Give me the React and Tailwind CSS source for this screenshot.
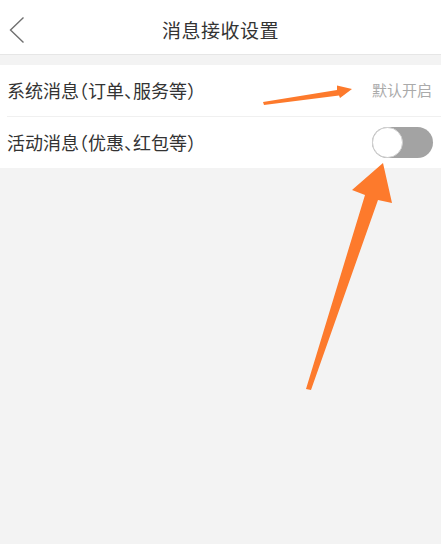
export default function App() {
  return (
    <div
      className="relative w-[441px] h-[544px] bg-[#f3f3f3] overflow-hidden"
      style={{ fontFamily: '"Noto Sans CJK SC", "Noto Sans", sans-serif' }}
    >
      <header className="relative flex items-center justify-center h-[55px] pt-[6px] bg-white border-b border-[#e6e6e6]">
        <svg className="absolute left-[8px] top-[15px]" width="18" height="30" viewBox="0 0 18 30">
          <path d="M15.5 2.5 L2.5 15 L15.5 27.5" fill="none" stroke="#707070" strokeWidth="1.4" />
        </svg>
        <h1 className="text-[19px] text-[#333] tracking-[0.5px]">消息接收设置</h1>
      </header>

      <div className="mt-[10px] bg-white pl-[7px] [font-feature-settings:'halt']">
        <div className="flex items-center justify-between h-[52px] pr-[9px] border-b border-[#f0f0f0]">
          <span className="text-[18px] text-[#333]">系统消息（订单、服务等）</span>
          <span className="text-[15px] text-[#aaa]">默认开启</span>
        </div>
        <div className="flex items-center justify-between h-[51px] pr-[8px]">
          <span className="text-[18px] text-[#333]">活动消息（优惠、红包等）</span>
          <div className="relative w-[61px] h-[31px] rounded-full bg-[#a3a3a3]">
            <div className="absolute left-0 top-0 w-[31px] h-[31px] rounded-full bg-white border border-[#d0d0d0]" />
          </div>
        </div>
      </div>

      <svg className="absolute left-0 top-0 pointer-events-none" width="441" height="544" viewBox="0 0 441 544">
        <polygon
          points="352,89 340,98 339,95.5 264,105 263,102 337,90 337,85.5"
          fill="#fd7a2c"
        />
        <polygon
          points="383,163 392,203 378,200 311,390 306,389 365,195 352,190"
          fill="#fd7a2c"
        />
      </svg>
    </div>
  );
}
